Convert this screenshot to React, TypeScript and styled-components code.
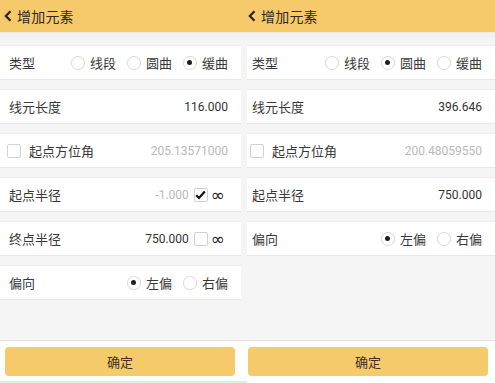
import React from "react";
import styled, { createGlobalStyle } from "styled-components";

const Global = createGlobalStyle`
  html, body { margin: 0; padding: 0; background: #fff; }
  body { font-family: "Noto Sans CJK SC", "Noto Sans", Roboto, sans-serif; color: #333; }
  * { box-sizing: border-box; }
`;

const Page = styled.div`
  display: flex;
  width: 495px;
  height: 383px;
  overflow: hidden;
`;

const Screen = styled.div<{ $w: number }>`
  width: ${(p) => p.$w}px;
  height: 383px;
  display: flex;
  flex-direction: column;
  background: #f4f4f4;
`;

const Header = styled.div<{ $pl: number }>`
  height: 32px;
  flex: none;
  background: #f6c96b;
  display: flex;
  align-items: center;
  gap: 5px;
  padding-left: ${(p) => p.$pl}px;
  color: #2f2a20;
`;

const Title = styled.span`
  font-size: 14px;
  line-height: 1;
  letter-spacing: 0.2px;
`;

const Body = styled.div<{ $pr: number }>`
  flex: 1;
  padding-top: 12px;
  padding-right: ${(p) => p.$pr}px;
  display: flex;
  flex-direction: column;
  gap: 9px;
  border-top: 1px solid #ebebeb;
  background: linear-gradient(#efefef, #f5f5f5 6px, #f5f5f5);
`;

const Row = styled.div<{ $pl: number }>`
  height: 35px;
  background: #fff;
  display: flex;
  align-items: center;
  justify-content: space-between;
  padding: 0 13px 0 ${(p) => p.$pl}px;
  border-top: 1px solid #eeeeee;
  border-bottom: 1px solid #e8e8e8;
`;

const Label = styled.span`
  font-size: 13px;
  color: #383838;
`;

const LeftGroup = styled.div`
  display: flex;
  align-items: center;
  gap: 8px;
`;

const RightGroup = styled.div`
  display: flex;
  align-items: center;
  gap: 11px;
`;

const Value = styled.span<{ $muted?: boolean }>`
  font-family: Roboto, "Noto Sans", sans-serif;
  font-size: 12px;
  color: ${(p) => (p.$muted ? "#b9b9b9" : "#333")};
`;

const Option = styled.span`
  display: flex;
  align-items: center;
  gap: 5px;
  font-size: 13px;
  color: #383838;
`;

const RadioCircle = styled.span<{ $on: boolean }>`
  width: 14px;
  height: 14px;
  border-radius: 50%;
  border: 1px solid #dcdcdc;
  background: #fff;
  box-shadow: 0 0 1px rgba(0, 0, 0, 0.08);
  display: flex;
  align-items: center;
  justify-content: center;
  &::after {
    content: "";
    width: 5px;
    height: 5px;
    border-radius: 50%;
    background: ${(p) => (p.$on ? "#1e1e1e" : "transparent")};
  }
`;

const Box = styled.span`
  width: 14px;
  height: 14px;
  border: 1px solid #d2d2d2;
  border-radius: 2px;
  background: #fff;
  display: flex;
  align-items: center;
  justify-content: center;
`;

const Inf = styled.span`
  font-family: "Noto Sans", "DejaVu Sans", sans-serif;
  font-size: 17px;
  line-height: 1;
  color: #222;
  margin-left: -2px;
  margin-right: 3px;
`;

const Pair = styled.div`
  display: flex;
  align-items: center;
  gap: 5px;
`;

const Footer = styled.div<{ $pl: number; $pr: number; $green: boolean }>`
  height: 43px;
  flex: none;
  background: #fff;
  border-top: 1px solid #e4e4e4;
  padding: 6px ${(p) => p.$pr}px 0 ${(p) => p.$pl}px;
  border-bottom: 2px solid ${(p) => (p.$green ? "#dcf1dc" : "#fff")};
`;

const Button = styled.div`
  height: 29px;
  border-radius: 4px;
  background: #f5ca6b;
  display: flex;
  align-items: center;
  justify-content: center;
  font-size: 13px;
  color: #3a3220;
`;

const Chevron = () => (
  <svg width="8" height="12" viewBox="0 0 8 12">
    <path d="M6.5 1.2 L1.8 6 L6.5 10.8" fill="none" stroke="#2a2418" strokeWidth="2.2" />
  </svg>
);

const Check = () => (
  <svg width="11" height="10" viewBox="0 0 11 10">
    <path d="M1.2 5.2 L4 8 L9.8 1.5" fill="none" stroke="#111" strokeWidth="2.2" />
  </svg>
);

const Radio = ({ on, text }: { on: boolean; text: string }) => (
  <Option>
    <RadioCircle $on={on} />
    {text}
  </Option>
);

type Cfg = {
  w: number;
  headPl: number;
  rowPl: number;
  bodyPr: number;
  btnPl: number;
  btnPr: number;
  green: boolean;
  type: number;
  length: string;
  azimuth: string;
  spiral: boolean;
};

const PhoneScreen = ({ c }: { c: Cfg }) => (
  <Screen $w={c.w}>
    <Header $pl={c.headPl}>
      <Chevron />
      <Title>增加元素</Title>
    </Header>
    <Body $pr={c.bodyPr}>
      <Row $pl={c.rowPl}>
        <Label>类型</Label>
        <RightGroup>
          <Radio on={c.type === 0} text="线段" />
          <Radio on={c.type === 1} text="圆曲" />
          <Radio on={c.type === 2} text="缓曲" />
        </RightGroup>
      </Row>
      <Row $pl={c.rowPl}>
        <Label>线元长度</Label>
        <Value>{c.length}</Value>
      </Row>
      <Row $pl={c.rowPl - 2}>
        <LeftGroup>
          <Box />
          <Label>起点方位角</Label>
        </LeftGroup>
        <Value $muted>{c.azimuth}</Value>
      </Row>
      {c.spiral ? (
        <>
          <Row $pl={c.rowPl}>
            <Label>起点半径</Label>
            <Pair>
              <Value $muted>-1.000</Value>
              <Box>
                <Check />
              </Box>
              <Inf>∞</Inf>
            </Pair>
          </Row>
          <Row $pl={c.rowPl}>
            <Label>终点半径</Label>
            <Pair>
              <Value>750.000</Value>
              <Box />
              <Inf>∞</Inf>
            </Pair>
          </Row>
        </>
      ) : (
        <Row $pl={c.rowPl}>
          <Label>起点半径</Label>
          <Value>750.000</Value>
        </Row>
      )}
      <Row $pl={c.rowPl}>
        <Label>偏向</Label>
        <RightGroup>
          <Radio on text="左偏" />
          <Radio on={false} text="右偏" />
        </RightGroup>
      </Row>
    </Body>
    <Footer $pl={c.btnPl} $pr={c.btnPr} $green={c.green}>
      <Button>确定</Button>
    </Footer>
  </Screen>
);

const left: Cfg = {
  w: 247,
  headPl: 4,
  rowPl: 9,
  bodyPr: 6,
  btnPl: 5,
  btnPr: 12,
  green: true,
  type: 2,
  length: "116.000",
  azimuth: "205.13571000",
  spiral: true,
};

const right: Cfg = {
  w: 248,
  headPl: 1,
  rowPl: 5,
  bodyPr: 0,
  btnPl: 1,
  btnPr: 7,
  green: false,
  type: 1,
  length: "396.646",
  azimuth: "200.48059550",
  spiral: false,
};

export default function App() {
  return (
    <>
      <Global />
      <Page>
        <PhoneScreen c={left} />
        <PhoneScreen c={right} />
      </Page>
    </>
  );
}
